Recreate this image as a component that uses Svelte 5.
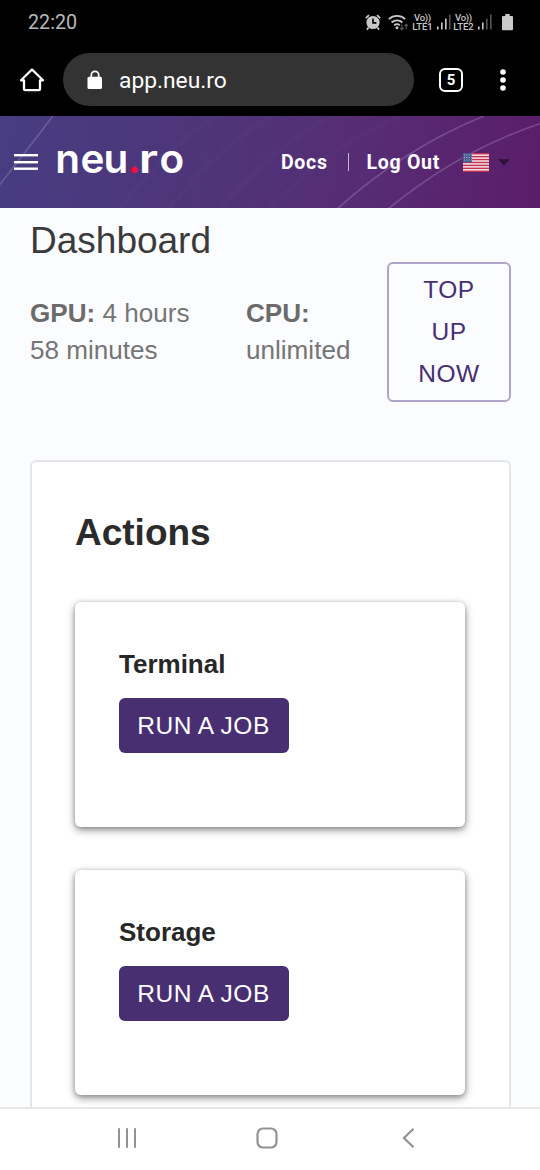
<script>
  const jobs = ['Terminal', 'Storage'];
  const stripes = [0, 1, 2, 3, 4, 5, 6];
  const sims = [
    { label: 'LTE1', strong: 3 },
    { label: 'LTE2', strong: 2 }
  ];
  const bars = [3, 7, 11, 15];
</script>

<div class="screen">
  <div class="status">
    <span class="clock">22:20</span>
    <div class="indicators">
      <svg class="alarm" width="16" height="17" viewBox="0 0 16 17">
        <circle cx="8" cy="8.500" r="6.600" fill="#c9c9c9" />
        <path d="M.8 4.200 4 1.200M15.200 4.200 12 1.200M3.500 13.500 2 15.800M12.500 13.500 14 15.800" stroke="#c9c9c9" stroke-width="1.800" fill="none" />
        <path d="M8 4.600v4.300h3.400" stroke="#000" stroke-width="1.600" fill="none" />
      </svg>
      <svg class="wifi" width="21" height="17" viewBox="0 0 21 17">
        <g fill="none" stroke="#c9c9c9" stroke-width="1.800">
          <path d="M.8 5.200a12 12 0 0 1 16.400 0" />
          <path d="M3.600 8.500a7.800 7.800 0 0 1 10.800 0" />
          <path d="M6.200 11.300a4 4 0 0 1 5.600 0" />
        </g>
        <circle cx="9" cy="13.800" r="1.500" fill="#c9c9c9" />
        <path d="M13.900 10.500v5M12.200 13.800l1.700 2 1.700-2M18.200 15.500v-5M16.500 12.200l1.700-2 1.700 2" stroke="#555" stroke-width="1.200" fill="none" />
      </svg>
      {#each sims as sim}
        <div class="sim">
          <div class="volte"><span>Vo))</span><span>{sim.label}</span></div>
          <svg width="14" height="16" viewBox="0 0 14 16">
            {#each bars as h, i}
              <rect x={i * 4} y={15.5 - h} width="1.600" height={h} fill={i < sim.strong ? '#c9c9c9' : '#555'} />
            {/each}
          </svg>
        </div>
      {/each}
      <svg class="battery" width="11" height="17" viewBox="0 0 11 17">
        <path d="M3.300 0h4.400v2H10q1 0 1 1v12.200q0 1-1 1H1q-1 0-1-1V3q0-1 1-1h2.300z" fill="#c9c9c9" />
      </svg>
    </div>
  </div>

  <div class="browser">
    <svg class="home" width="24" height="24" viewBox="0 0 24 24" fill="none" stroke="#fff" stroke-width="2.300" stroke-linejoin="round">
      <path d="M1 12.300 12 1.500l11 10.800h-3v8.700q0 1.200-1.200 1.200H5.200Q4 22.200 4 21v-8.700z" />
    </svg>
    <div class="address">
      <svg width="16" height="20" viewBox="0 0 16 20">
        <path d="M4.300 8V5a3.700 3.700 0 0 1 7.400 0v3" fill="none" stroke="#fff" stroke-width="1.700" />
        <rect x=".5" y="6.700" width="14.500" height="12.300" rx="1.600" fill="#fff" />
      </svg>
      <span>app.neu.ro</span>
    </div>
    <div class="tabs">5</div>
    <svg class="more" width="6" height="22" viewBox="0 0 6 22" fill="#fff">
      <circle cx="3" cy="3" r="2.800" /><circle cx="3" cy="11" r="2.800" /><circle cx="3" cy="19" r="2.800" />
    </svg>
  </div>

  <header>
    <svg class="swirl" width="540" height="92" viewBox="0 0 540 92" fill="none">
      <g stroke="#a48ac0" stroke-opacity=".38" stroke-width="1.700">
        <path d="M-2 71Q30 30 53 0" />
        <path d="M337 93Q405 32 484 0" />
        <path d="M388 93Q460 34 542 7" />
      </g>
      <g stroke="#fff" stroke-opacity=".015" stroke-width="5">
        <path d="M120 92Q165 35 215 0M170 92Q215 35 270 0M220 92Q270 35 330 0M270 92Q330 30 400 0" />
      </g>
    </svg>
    <svg class="menu" width="24" height="17" viewBox="0 0 24 17" fill="#fff">
      <rect width="24" height="2.400" y="0" /><rect width="24" height="2.400" y="7" /><rect width="24" height="2.400" y="13.500" />
    </svg>
    <svg class="logo" width="134" height="64" viewBox="0 0 134 64" aria-label="neu.ro">
      <g fill="#fff">
        <text y="43.200" x="1.300 26.400 49.500">neu</text>
        <text y="43.200" x="73.800" fill="#ff0c38">.</text>
        <text transform="translate(84.800 43.200) scale(1.200 1)">r</text>
        <text y="43.200" x="105.500">o</text>
      </g>
    </svg>
    <nav>
      <span>Docs</span>
      <i></i>
      <span>Log Out</span>
    </nav>
    <svg class="flag" width="26" height="19" viewBox="0 0 26 19">
      <rect width="26" height="19" fill="#f5e9ef" />
      {#each stripes as s}
        <rect y={s * 2.92} width="26" height="1.460" fill="#c5304f" />
      {/each}
      <rect width="9" height="9.500" fill="#465a8d" />
      <path d="M1 2h8M1 4.500h8M1 7h8" stroke="#b7c2dc" stroke-width="1" stroke-dasharray="1 1.300" />
    </svg>
    <svg class="caret" width="12" height="7" viewBox="0 0 12 7"><path d="M0 .3h12L6 6.600z" fill="#2c123b" /></svg>
  </header>

  <main>
    <h1>Dashboard</h1>
    <section class="quota">
      <p class="gpu"><b>GPU:</b> 4 hours<br />58 minutes</p>
      <p class="cpu"><b>CPU:</b><br />unlimited</p>
      <button class="top-up">TOP<br />UP<br />NOW</button>
    </section>
    <section class="actions">
      <h2>Actions</h2>
      {#each jobs as job}
        <article>
          <h3>{job}</h3>
          <button class="run">RUN A JOB</button>
        </article>
      {/each}
    </section>
  </main>

  <footer>
    <svg width="20" height="20" viewBox="0 0 20 20" stroke="#929292" stroke-width="2" stroke-linecap="round"><path d="M2 1v18M10 1v18M18 1v18" /></svg>
    <svg width="22" height="22" viewBox="0 0 22 22" fill="none" stroke="#929292" stroke-width="2.200"><rect x="1.500" y="1.500" width="19" height="19" rx="5.500" /></svg>
    <svg width="13" height="20" viewBox="0 0 13 20" fill="none" stroke="#929292" stroke-width="2.200"><path d="M11.500 .8 2 10l9.500 9.200" /></svg>
  </footer>
</div>

<style>
  :global(body) { margin: 0; }
  .screen {
    width: 540px; height: 1170px; overflow: hidden;
    display: flex; flex-direction: column;
    background: #fbfcff; font-family: "Liberation Sans", Arial, sans-serif;
  }
  svg { display: block; flex: none; }
  .status {
    height: 44px; flex: none; box-sizing: border-box; padding: 0 27px 0 28px;
    display: flex; justify-content: space-between; align-items: center;
    background: #000; color: #b9b9b9; font-family: Roboto, sans-serif;
  }
  .clock { padding-top: 1px; font-size: 19.700px; line-height: 25px; }
  .indicators { display: flex; align-items: center; }
  .wifi { margin: 0 4px 0 7px; }
  .sim { display: flex; align-items: center; gap: 4px; margin-right: 3px; }
  .volte {
    width: 20px; display: flex; flex-direction: column; align-items: center;
    font-size: 9.500px; line-height: 9px; font-weight: 500; color: #c9c9c9; white-space: nowrap;
  }
  .volte span:first-child { letter-spacing: -.3px; }
  .battery { margin-left: 7.500px; }
  .browser {
    height: 72px; flex: none; display: flex; align-items: center;
    box-sizing: border-box; padding: 0 34px 1px 20px; background: #000; color: #fff;
    font-family: Roboto, sans-serif;
  }
  .address {
    width: 351px; height: 53px; margin-left: 19px; box-sizing: border-box; padding-left: 24px;
    display: flex; align-items: center; gap: 16px; border-radius: 27px;
    background: #333; font-size: 22.800px;
  }
  .address span { padding-top: 1px; }
  .tabs {
    width: 24px; height: 24px; box-sizing: border-box; margin: 0 37px 0 25px;
    display: flex; align-items: center; justify-content: center;
    border: 2.500px solid #fff; border-radius: 6px; font-size: 15px; font-weight: 700;
  }
  header {
    position: relative; height: 92px; flex: none; box-sizing: border-box; padding-left: 14px;
    display: flex; align-items: center;
    background: linear-gradient(100deg, #473d81 0%, #4f3479 40%, #572b74 70%, #5b1c68 100%);
    color: #fff; font-family: Roboto, sans-serif;
  }
  .swirl { position: absolute; inset: 0; }
  .menu, .logo, nav, .flag, .caret { position: relative; }
  .logo { margin-left: 16px; font: 600 40.500px Inter, sans-serif; }
  nav { width: 159px; margin-left: 93px; display: flex; align-items: center; font-size: 19.500px; font-weight: 700; letter-spacing: .7px; white-space: nowrap; }
  nav i { width: 1.500px; height: 18px; margin: 0 18px 0 20px; background: #c5b6d2; }
  .flag { margin-left: 23px; }
  .caret { margin-left: 9px; }
  main { flex: 1; min-height: 0; overflow: hidden; padding: 0 29px 0 30px; }
  h1 { margin: 11px 0 0; font-size: 37px; line-height: 43px; font-weight: 400; color: #3b3b3b; }
  .quota { display: flex; }
  .quota p { margin: 33px 0 0; font-size: 26.100px; line-height: 37px; color: #757575; }
  .quota b { color: #6b6b6b; }
  .gpu { width: 216px; }
  .cpu { width: 141px; }
  button {
    box-sizing: border-box; font: 24.500px "Liberation Sans", Arial, sans-serif;
    letter-spacing: .5px; border-radius: 6px;
  }
  .top-up {
    width: 124px; height: 140px; padding: 0; line-height: 42px;
    border: 2px solid #b1a4ca; background: #fff0; color: #472f72;
  }
  .actions {
    margin-top: 58px; height: 800px; box-sizing: border-box; padding: 50px 44px 0 43px;
    border: 2px solid #e5e6e8; border-radius: 6px; background: #fff;
  }
  h2 { margin: 0 0 48px; font-size: 37px; line-height: 42px; color: #2b2b2b; }
  article {
    height: 225px; box-sizing: border-box; padding: 46px 44px 0; margin-bottom: 43.400px;
    border-radius: 6px; background: #fff;
    box-shadow: 0 3px 8px rgba(0,0,0,.42), 0 1px 4px rgba(0,0,0,.2);
  }
  h3 { margin: 0 0 17.500px; font-size: 26px; line-height: 32px; color: #272727; }
  .run { width: 170px; height: 55.500px; padding: 1px 1px 0 0; border: 0; background: #482f72; color: #fff; white-space: nowrap; }
  footer {
    height: 63px; flex: none; box-sizing: border-box; padding: 0 125px 4px 117px;
    display: grid; grid-template-columns: 139px 22px 1fr; align-items: center;
    background: #fff; border-top: 2px solid #e7e7e7;
  }
  footer svg:last-child { justify-self: end; }
</style>
